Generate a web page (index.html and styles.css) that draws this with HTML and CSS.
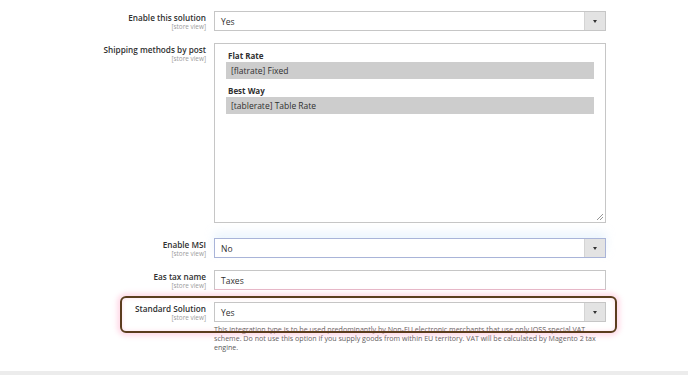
FILE: index.html
```html
<!DOCTYPE html>
<html>
<head>
<meta charset="utf-8">
<link rel="stylesheet" href="styles.css">
</head>
<body>
<div class="form">
  <div class="row">
    <div class="label"><span class="title">Enable this solution</span><span class="scope">[store view]</span></div>
    <div class="field">
      <div class="select"><span class="value">Yes</span><span class="arrow"><i></i></span></div>
    </div>
  </div>
  <div class="row row-multi">
    <div class="label"><span class="title">Shipping methods by post</span><span class="scope">[store view]</span></div>
    <div class="field">
      <div class="multi">
        <div class="group">Flat Rate</div>
        <div class="option">[flatrate] Fixed</div>
        <div class="group">Best Way</div>
        <div class="option">[tablerate] Table Rate</div>
        <svg class="grip" width="8" height="8" viewBox="0 0 8 8"><path d="M7 1 L1 7 M7 4 L4 7" stroke="#8a8a8a" stroke-width="0.9" fill="none"/></svg>
      </div>
    </div>
  </div>
  <div class="row">
    <div class="label"><span class="title">Enable MSI</span><span class="scope">[store view]</span></div>
    <div class="field">
      <div class="select focus"><span class="value">No</span><span class="arrow"><i></i></span></div>
    </div>
  </div>
  <div class="row">
    <div class="label"><span class="title">Eas tax name</span><span class="scope">[store view]</span></div>
    <div class="field">
      <div class="input"><span class="value">Taxes</span></div>
    </div>
  </div>
  <div class="row row-hl">
    <div class="label"><span class="title">Standard Solution</span><span class="scope">[store view]</span></div>
    <div class="field">
      <div class="select"><span class="value">Yes</span><span class="arrow"><i></i></span></div>
      <p class="note">This integration type is to be used predominantly by Non-EU electronic merchants that use only IOSS special VAT scheme. Do not use this option if you supply goods from within EU territory. VAT will be calculated by Magento 2 tax engine.</p>
    </div>
    <div class="highlight"></div>
  </div>
</div>
<div class="footer-line"></div>
</body>
</html>
```

FILE: styles.css
```css
html, body {
  margin: 0;
  padding: 0;
  background: #ffffff;
  font-family: "Open Sans", "Liberation Sans", sans-serif;
  color: #303030;
}
body {
  width: 688px;
  height: 375px;
  overflow: hidden;
  position: relative;
}
.form {
  padding-top: 11px;
  display: flex;
  flex-direction: column;
  gap: 12px;
  width: 606px;
}
.row {
  display: grid;
  grid-template-columns: 206px 392px;
  column-gap: 8px;
  position: relative;
}
.row-multi {
  margin-bottom: 3px;
}
.label {
  display: flex;
  flex-direction: column;
  align-items: flex-end;
  padding-top: 1px;
}
.title {
  font-size: 8.2px;
  font-weight: 600;
  line-height: 11px;
  color: #303030;
}
.scope {
  font-size: 6.4px;
  line-height: 8px;
  color: #9a9a9a;
}
.select, .input {
  height: 20px;
  box-sizing: border-box;
  border: 1px solid #c6c6c6;
  background: #fff;
  display: flex;
  align-items: center;
  font-size: 8.5px;
  color: #303030;
}
.value {
  flex: 1;
  padding-left: 6px;
}
.arrow {
  width: 20px;
  align-self: stretch;
  background: #e3e3e3;
  border-left: 1px solid #d4d4d4;
  display: flex;
  align-items: center;
  justify-content: center;
}
.arrow i {
  width: 0;
  height: 0;
  border-left: 2.5px solid transparent;
  border-right: 2.5px solid transparent;
  border-top: 3px solid #333;
}
.select.focus {
  border-color: #a9b4d8;
  box-shadow: 0 -6px 10px rgba(200, 225, 250, 0.35);
}
.input {
  border-bottom-color: #e6b8c8;
}
.multi {
  height: 180px;
  box-sizing: border-box;
  border: 1px solid #c6c6c6;
  padding: 6px 11px 0 11px;
  position: relative;
  background: #fff;
}
.group {
  font-size: 8px;
  font-weight: 700;
  color: #303030;
  line-height: 12px;
  padding-left: 2px;
}
.option {
  background: #cdcdcd;
  height: 17px;
  line-height: 17px;
  font-size: 8.5px;
  padding-left: 5px;
  margin-bottom: 6px;
  color: #303030;
}
.grip {
  position: absolute;
  right: 1px;
  bottom: 1px;
}
.note {
  margin: 3px 0 0 0;
  font-size: 7.1px;
  line-height: 9px;
  color: #5a5a5a;
  padding-right: 4px;
}
.highlight {
  position: absolute;
  left: 120px;
  top: -6px;
  width: 497px;
  height: 37px;
  box-sizing: border-box;
  border: 2.5px solid #5b3d1e;
  border-radius: 6px;
  box-shadow: 0 0 5px 3px rgba(255, 175, 205, 0.45), inset 0 0 4px rgba(255, 190, 215, 0.5);
  pointer-events: none;
}
.footer-line {
  position: absolute;
  left: 0;
  right: 0;
  top: 371px;
  height: 4px;
  background: #ececec;
}
```
